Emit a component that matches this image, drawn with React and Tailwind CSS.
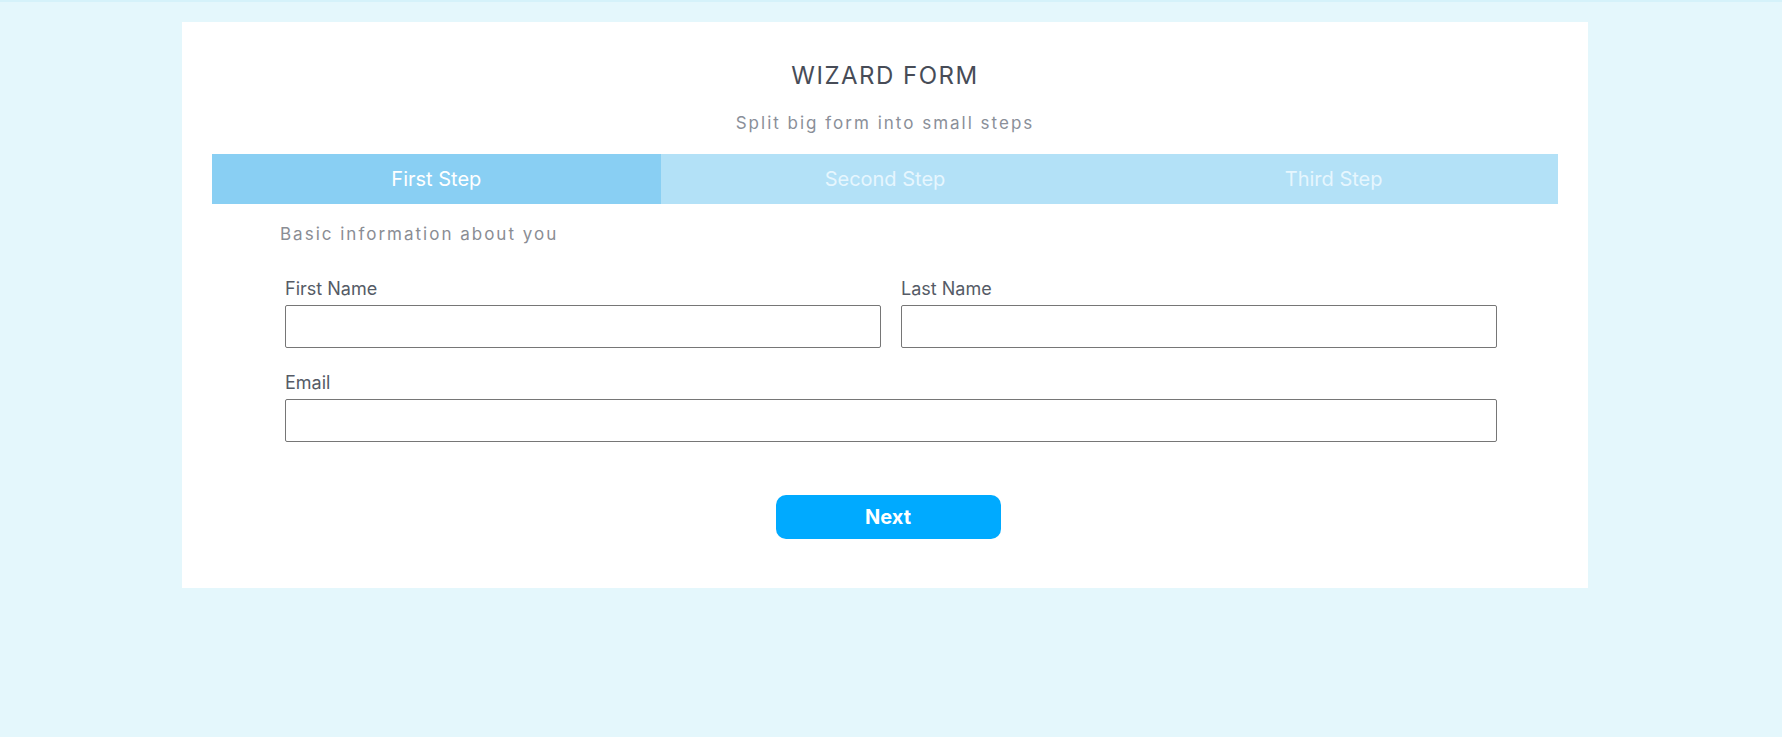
import React, { useState } from 'react';

const steps = ['First Step', 'Second Step', 'Third Step'];

const Field = ({ label, id }) => (
  <div className="flex flex-col">
    <label htmlFor={id} className="text-[18px] leading-6 text-[#555b66]">
      {label}
    </label>
    <input
      id={id}
      type="text"
      className="mt-1 h-[43px] w-full rounded-[2px] border border-[#767676] bg-white px-3 text-[16px] outline-none"
    />
  </div>
);

export default function App() {
  const [active] = useState(0);

  return (
    <div
      className="min-h-[737px] border-t-2 border-[#d5f2fa] bg-[#e4f7fc] pt-[20px]"
      style={{ fontFamily: 'Inter, "Noto Sans", sans-serif' }}
    >
      <div className="ml-[182px] w-[1406px] bg-white px-[30px] pt-[39px] pb-[49px]">
        {/* Header */}
        <h1 className="text-center text-[24px] leading-[29px] font-normal tracking-[1.5px] text-[#474c57]">
          WIZARD FORM
        </h1>
        <p className="mt-[21px] text-center text-[17px] leading-6 tracking-[2px] text-[#8a8f99]">
          Split big form into small steps
        </p>

        {/* Steps */}
        <div className="mt-[19px] grid h-[50px] grid-cols-3">
          {steps.map((s, i) => (
            <div
              key={s}
              className={
                i === active
                  ? 'flex items-center justify-center bg-[#89cff3] text-[20px] text-white'
                  : 'flex items-center justify-center bg-[#b3e1f7] text-[20px] text-[#e6f6fe]'
              }
            >
              {s}
            </div>
          ))}
        </div>

        {/* Form */}
        <h2 className="mt-[18px] pl-[68px] text-[17px] leading-6 tracking-[2px] text-[#8a8d94]">
          Basic information about you
        </h2>

        <div className="mt-[31px] pl-[73px] pr-[61px]">
          <div className="grid grid-cols-2 gap-x-[20px]">
            <Field label="First Name" id="first" />
            <Field label="Last Name" id="last" />
          </div>
          <div className="mt-[23px]">
            <Field label="Email" id="email" />
          </div>
        </div>

        <div className="mt-[53px] flex justify-center pl-[6px]">
          <button className="h-[44px] w-[225px] rounded-[10px] bg-[#00aaff] text-[20px] font-bold text-white">
            Next
          </button>
        </div>
      </div>
    </div>
  );
}
